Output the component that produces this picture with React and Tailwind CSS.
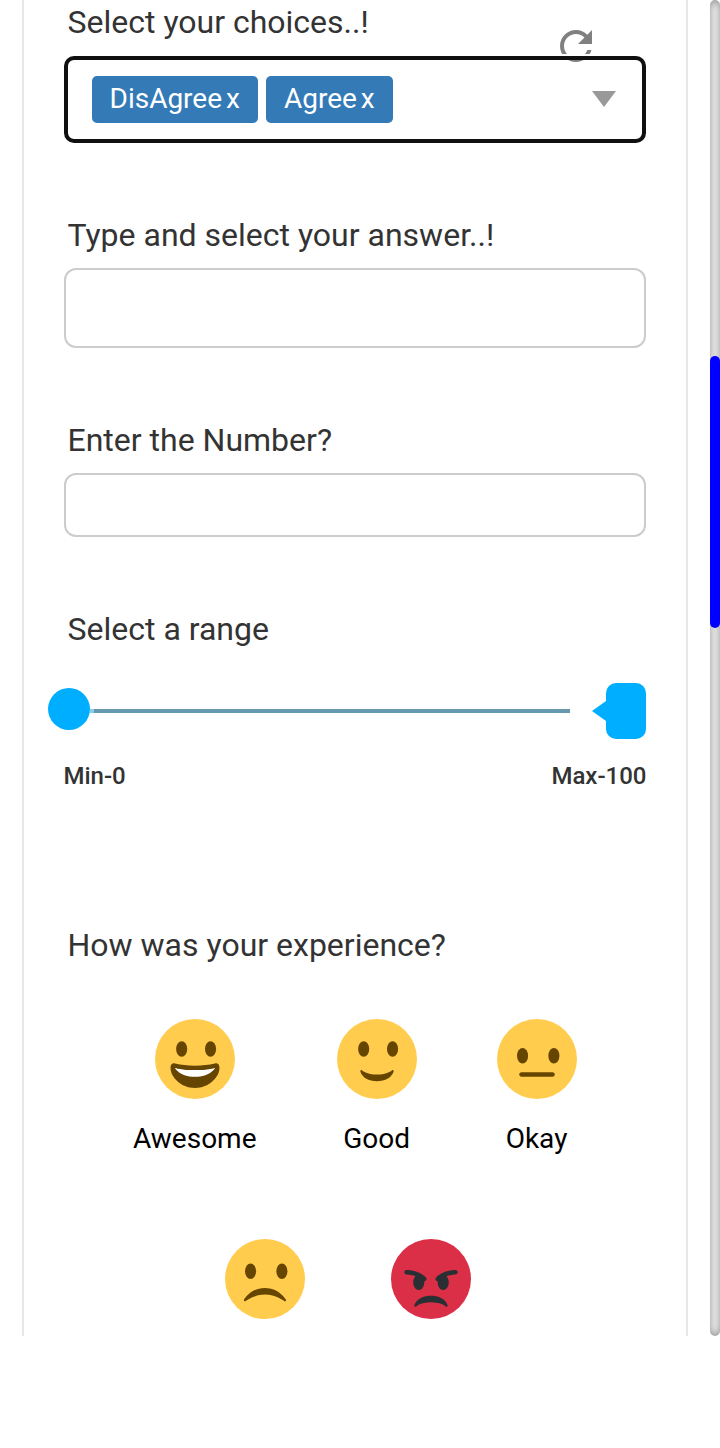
import React from "react";

const MOUTHS = {
  awesome: (
    <>
      <path fill="#664500" d="M18 21c-3.623 0-6.027-.422-9-1-.679-.131-2 0-2 2 0 4 4.595 9 11 9 6.404 0 11-5 11-9 0-2-1.321-2.132-2-2-2.973.578-5.377 1-9 1z" />
      <path fill="#fff" d="M9 22s3 1 9 1 9-1 9-1-2 4-9 4-9-4-9-4z" />
    </>
  ),
  good: (
    <path fill="#664500" d="M10.515 23.621C10.56 23.8 11.683 28 18 28c6.318 0 7.44-4.2 7.485-4.379.055-.217-.043-.442-.237-.554-.195-.111-.439-.078-.6.077C24.629 23.163 22.694 25 18 25s-6.63-1.837-6.648-1.855C11.256 23.05 11.128 23 11 23c-.084 0-.169.021-.246.064-.196.112-.294.339-.239.557z" />
  ),
  okay: (
    <path fill="#664500" d="M25 26H11c-.552 0-1-.447-1-1s.448-1 1-1h14c.553 0 1 .447 1 1s-.447 1-1 1z" />
  ),
  bad: (
    <path fill="#664500" d="M8.665 27.871c.178.161.444.171.635.029.039-.029 3.922-2.9 8.7-2.9 4.766 0 8.662 2.871 8.7 2.9.191.142.457.13.635-.029.177-.16.217-.424.094-.628C27.3 27.029 24.212 22 18 22s-9.301 5.028-9.429 5.243c-.123.205-.084.468.094.628z" />
  ),
};

function Face({ mouth, left, right, y }) {
  return (
    <svg viewBox="0 0 36 36" className="block size-20">
      <circle cx="18" cy="18" r="18" fill="#FFCC4D" />
      <ellipse cx={left} cy={y} rx="2.5" ry="3.5" fill="#664500" />
      <ellipse cx={right} cy={y} rx="2.5" ry="3.5" fill="#664500" />
      {MOUTHS[mouth]}
    </svg>
  );
}

function AngryFace() {
  return (
    <svg viewBox="0 0 36 36" className="block size-20">
      <circle cx="18" cy="18" r="18" fill="#DA2F47" />
      <path fill="#292F33" d="M25.485 29.879C25.44 29.7 24.317 25.5 18 25.5c-6.318 0-7.44 4.2-7.485 4.379-.055.217.043.442.237.554.195.109.439.079.6-.077.019-.019 1.954-1.856 6.648-1.856s6.63 1.837 6.648 1.855c.096.095.224.145.352.145.084 0 .169-.021.246-.064.196-.112.294-.339.239-.557zm-9.778-12.586C12.452 14.038 7.221 14 7 14c-.552 0-.999.447-.999.998-.001.552.446 1 .998 1.002.029 0 1.925.022 3.983.737-.593.64-.982 1.634-.982 2.763 0 1.934 1.119 3.5 2.5 3.5s2.5-1.566 2.5-3.5c0-.174-.019-.34-.037-.507.013 0 .025.007.037.007.256 0 .512-.098.707-.293.391-.391.391-1.023 0-1.414zM29 14c-.221 0-5.451.038-8.707 3.293-.391.391-.391 1.023 0 1.414.195.195.451.293.707.293.013 0 .024-.007.036-.007-.016.167-.036.333-.036.507 0 1.934 1.119 3.5 2.5 3.5s2.5-1.566 2.5-3.5c0-1.129-.389-2.123-.982-2.763 2.058-.715 3.954-.737 3.984-.737.551-.002.998-.45.997-1.002-.001-.551-.447-.998-.999-.998z" />
    </svg>
  );
}

function Label({ children }) {
  return (
    <label className="block h-11 pl-[3.5px] text-[32px] leading-[44px] whitespace-nowrap text-[#333]">
      {children}
    </label>
  );
}

function Chip({ children }) {
  return (
    <span className="flex h-[47px] items-start gap-1 rounded-[5px] bg-[#337ab7] pr-[18.5px] pl-[17.5px] text-[28px] leading-[45px] text-white">
      <span>{children}</span>
      <span>x</span>
    </span>
  );
}

function Mood({ name, children }) {
  return (
    <div className="flex flex-col items-center gap-5">
      {children}
      <span className="text-[28px] leading-[40px] text-black">{name}</span>
    </div>
  );
}

export default function App() {
  return (
    <div className="flex h-[1448px] w-[720px] items-start justify-between overflow-hidden bg-white pl-[22px] font-['Roboto',sans-serif]">
      <main className="h-[1336px] w-[666px] overflow-hidden border-x-2 border-[#e7e7e7] px-10">
        <section className="relative">
          <Label>Select your choices..!</Label>
          <svg viewBox="0 0 24 24" className="absolute top-[22px] left-[488px] size-12" fill="#808080">
            <path d="M17.65 6.35C16.2 4.9 14.21 4 12 4c-4.42 0-7.99 3.58-7.99 8s3.57 8 7.99 8c3.73 0 6.84-2.55 7.73-6h-2.08c-.82 2.33-3.04 4-5.65 4-3.31 0-6-2.69-6-6s2.69-6 6-6c1.66 0 3.14.69 4.22 1.78L13 11h7V4l-2.35 2.35z" />
          </svg>
          <div className="relative mt-3 flex h-[87px] items-center justify-between rounded-[10px] border-4 border-[#101010] pr-[26px] pl-6 shadow-[0_0_0_2px_#fff]">
            <div className="flex gap-2">
              <Chip>DisAgree</Chip>
              <Chip>Agree</Chip>
            </div>
            <svg viewBox="0 0 24 16" className="mb-px h-4 w-6" fill="#999">
              <path d="M0 0h24L12 16z" />
            </svg>
          </div>
        </section>

        <section className="mt-[70px]">
          <Label>Type and select your answer..!</Label>
          <div className="mt-[11px] h-20 rounded-xl border-2 border-[#ccc]" />
        </section>

        <section className="mt-[70px]">
          <Label>Enter the Number?</Label>
          <div className="mt-[11px] h-16 rounded-xl border-2 border-[#ccc]" />
        </section>

        <section className="mt-[70px]">
          <Label>Select a range</Label>
          <div className="mt-8 -ml-4 flex h-14 items-center">
            <div className="-mt-1 size-[42px] rounded-full bg-[#00aeff]" />
            <div className="h-1 w-1 bg-[#87ceeb]" />
            <div className="h-1 w-[476px] bg-[#6699b0]" />
            <svg viewBox="0 0 14 20" className="ml-[22px] h-5 w-3.5" fill="#00aeff">
              <path d="M0 10L14 0v20z" />
            </svg>
            <div className="h-14 w-10 rounded-[10px] bg-[#00aeff]" />
          </div>
          <div className="mt-5 -mr-[0.5px] -ml-[0.5px] flex justify-between text-2xl leading-[34px] font-medium text-[#333]">
            <span>Min-0</span>
            <span>Max-100</span>
          </div>
        </section>

        <section className="mt-[130px]">
          <Label>How was your experience?</Label>
          <div className="mt-[52px] flex pl-[69px]">
            <Mood name="Awesome">
              <Face mouth="awesome" left="12" right="25" y="13.5" />
            </Mood>
            <div className="ml-[80px] flex w-20 justify-center">
              <Mood name="Good">
                <Face mouth="good" left="12" right="25" y="13.5" />
              </Mood>
            </div>
            <div className="ml-20 flex w-20 justify-center">
              <Mood name="Okay">
                <Face mouth="okay" left="11.5" right="25.6" y="16.5" />
              </Mood>
            </div>
          </div>
          <div className="mt-20 flex gap-[86px] pl-[161px]">
            <Face mouth="bad" left="11.5" right="25.6" y="14.5" />
            <AngryFace />
          </div>
        </section>
      </main>

      <div className="h-[1336px] w-2.5 rounded-full bg-white pt-[356px] shadow-[inset_0_0_10px_grey]">
        <div className="h-[272px] w-2.5 rounded-full bg-[#00f]" />
      </div>
    </div>
  );
}
